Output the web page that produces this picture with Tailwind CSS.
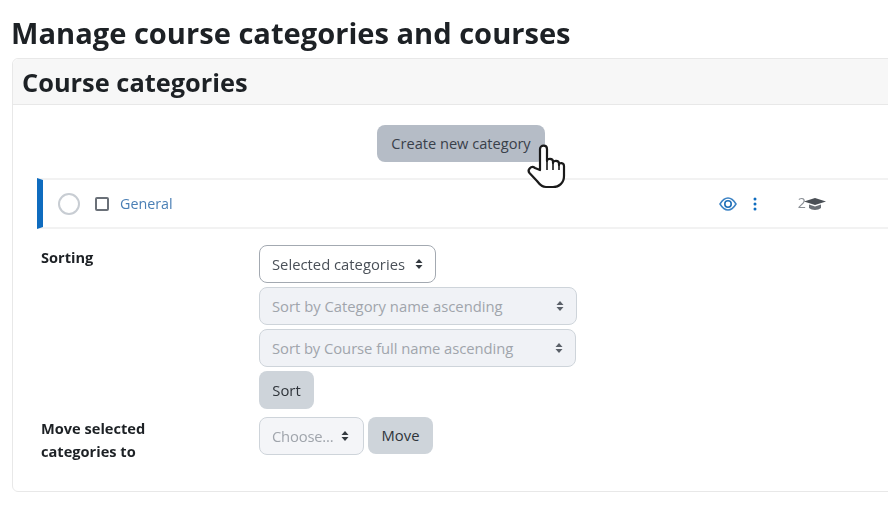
<!DOCTYPE html>
<html lang="en">
<head>
  <meta charset="UTF-8">
  <title>Manage course categories and courses</title>
  <script src="https://cdn.jsdelivr.net/npm/@tailwindcss/browser@4"></script>
</head>
<body class="bg-white overflow-hidden">
  <div class="w-[888px] h-[511px] overflow-hidden pl-3 pt-[15px] text-[#1d2125] font-['Open_Sans','Noto_Sans',sans-serif] blur-[0.6px]">
    <h1 class="text-[29.1px] leading-[36px] font-bold whitespace-nowrap -ml-px">Manage course categories and courses</h1>

    <!-- Card -->
    <div class="w-[900px] h-[434px] mt-[7px] border border-[#e8e8e8] rounded-md">
      <div class="h-[46px] bg-[#f7f7f7] border-b border-[#e8e8e8] rounded-t-md pl-[9px] pt-[2px] flex items-center">
        <h2 class="text-[25.4px] font-bold whitespace-nowrap">Course categories</h2>
      </div>

      <div class="pt-[20px] pl-[364px] relative">
        <button class="w-[168px] h-[37px] bg-[#b5bcc6] rounded-lg text-[14.6px] text-[#39404a] whitespace-nowrap">Create new category</button>
        <!-- Hand cursor -->
        <svg class="absolute left-[513px] top-[38px]" width="40" height="46" viewBox="0 0 40 46">
          <path d="M14 27 V6 C14 1.5 21 1.5 21 6 V18 C21 15 27 15 27 18.5 V20 C27 17 33 17 33 20.5 V22 C33 19 38 19.5 38 23 V33 C38 40 33 44 27 44 H20 C16 44 14 42 11 38 L3.5 30 C1 27 5 22 9 25 Z" fill="#fff" stroke="#1a1a1a" stroke-width="2.2" stroke-linejoin="round"/>
          <path d="M21 18 V27 M27 20 V27 M33 22 V27" fill="none" stroke="#1a1a1a" stroke-width="1.6"/>
        </svg>
      </div>

      <!-- Category row -->
      <div class="w-[860px] h-[51px] mt-[16px] ml-[24px] flex items-center border-y-2 border-[#f2f2f2] border-l-[6px] border-l-[#0f6cbf] text-[14.3px]">
        <span class="w-[22px] h-[22px] ml-[15px] rounded-full border-2 border-[#c8cdd3] bg-white"></span>
        <span class="w-[14px] h-[14px] ml-[15px] rounded-[2px] border-2 border-[#6a7078]"></span>
        <a class="ml-[11px] text-[#4a7fb5]">General</a>
        <svg class="ml-[546px]" width="18" height="14" viewBox="0 0 18 14">
          <path d="M1 7 C4 2 6.5 1 9 1 S14 2 17 7 C14 12 11.500 13 9 13 S4 12 1 7 Z" fill="none" stroke="#3b82c4" stroke-width="1.500"/>
          <circle cx="9" cy="7" r="3.200" fill="none" stroke="#1f6fb8" stroke-width="1.600"/>
        </svg>
        <svg class="ml-[16px]" width="4" height="14" viewBox="0 0 4 14">
          <circle cx="2" cy="2" r="1.500" fill="#0f6cbf"/><circle cx="2" cy="7" r="1.500" fill="#0f6cbf"/><circle cx="2" cy="12" r="1.500" fill="#0f6cbf"/>
        </svg>
        <span class="ml-[41px] text-[#8a8f95] leading-none">2</span>
        <svg class="-ml-[2px]" width="22" height="14" viewBox="0 0 22 14">
          <path d="M0 4.500 L11 1 L22 4.500 L11 8 Z" fill="#4a4f55"/>
          <path d="M5 7.500 V11 C8 13.500 14 13.500 17 11 V7.500 L11 9.500 Z" fill="#6a6f75"/>
        </svg>
      </div>

      <!-- Sorting -->
      <div class="flex pl-[28px] mt-[16px]">
        <div class="w-[218px] text-[14.6px] font-bold leading-[24px]">Sorting</div>
        <div class="flex flex-col items-start gap-[4px] text-[14.8px]">
          <div class="w-[177px] h-[38px] px-[12px] flex items-center justify-between border border-[#a3a9b1] rounded-lg text-[#4a5058]">
            <span>Selected categories</span>
            <svg width="8" height="10" viewBox="0 0 8 10"><path d="M4 0 L7.500 4 H0.500 Z M4 10 L7.500 6 H0.500 Z" fill="#343a40"/></svg>
          </div>
          <div class="w-[318px] h-[38px] px-[12px] flex items-center justify-between border border-[#ced4da] rounded-lg bg-[#f0f2f6] text-[#a0a5ac]">
            <span>Sort by Category name ascending</span>
            <svg width="8" height="10" viewBox="0 0 8 10"><path d="M4 0 L7.500 4 H0.500 Z M4 10 L7.500 6 H0.500 Z" fill="#5a6068"/></svg>
          </div>
          <div class="w-[317px] h-[38px] px-[12px] flex items-center justify-between border border-[#ced4da] rounded-lg bg-[#f0f2f6] text-[#a0a5ac]">
            <span class="tracking-[-0.06px]">Sort by Course full name ascending</span>
            <svg width="8" height="10" viewBox="0 0 8 10"><path d="M4 0 L7.500 4 H0.500 Z M4 10 L7.500 6 H0.500 Z" fill="#5a6068"/></svg>
          </div>
          <button class="w-[55px] h-[38px] rounded-lg bg-[#ced4da] text-[#2f343a]">Sort</button>
        </div>
      </div>

      <!-- Move -->
      <div class="flex pl-[28px] mt-[8px]">
        <div class="w-[218px] text-[14.6px] font-bold leading-[23px]">Move selected<br>categories to</div>
        <div class="flex items-start gap-[4px] text-[14.8px]">
          <div class="w-[105px] h-[38px] pl-[12px] pr-[14px] flex items-center justify-between border border-[#ced4da] rounded-lg bg-[#f4f5f8] text-[#a0a5ac]">
            <span class="tracking-[-0.2px]">Choose...</span>
            <svg width="8" height="10" viewBox="0 0 8 10"><path d="M4 0 L7.500 4 H0.500 Z M4 10 L7.500 6 H0.500 Z" fill="#343a40"/></svg>
          </div>
          <button class="w-[65px] h-[37px] rounded-lg bg-[#ced4da] text-[#2f343a]">Move</button>
        </div>
      </div>
    </div>
  </div>
</body>
</html>
